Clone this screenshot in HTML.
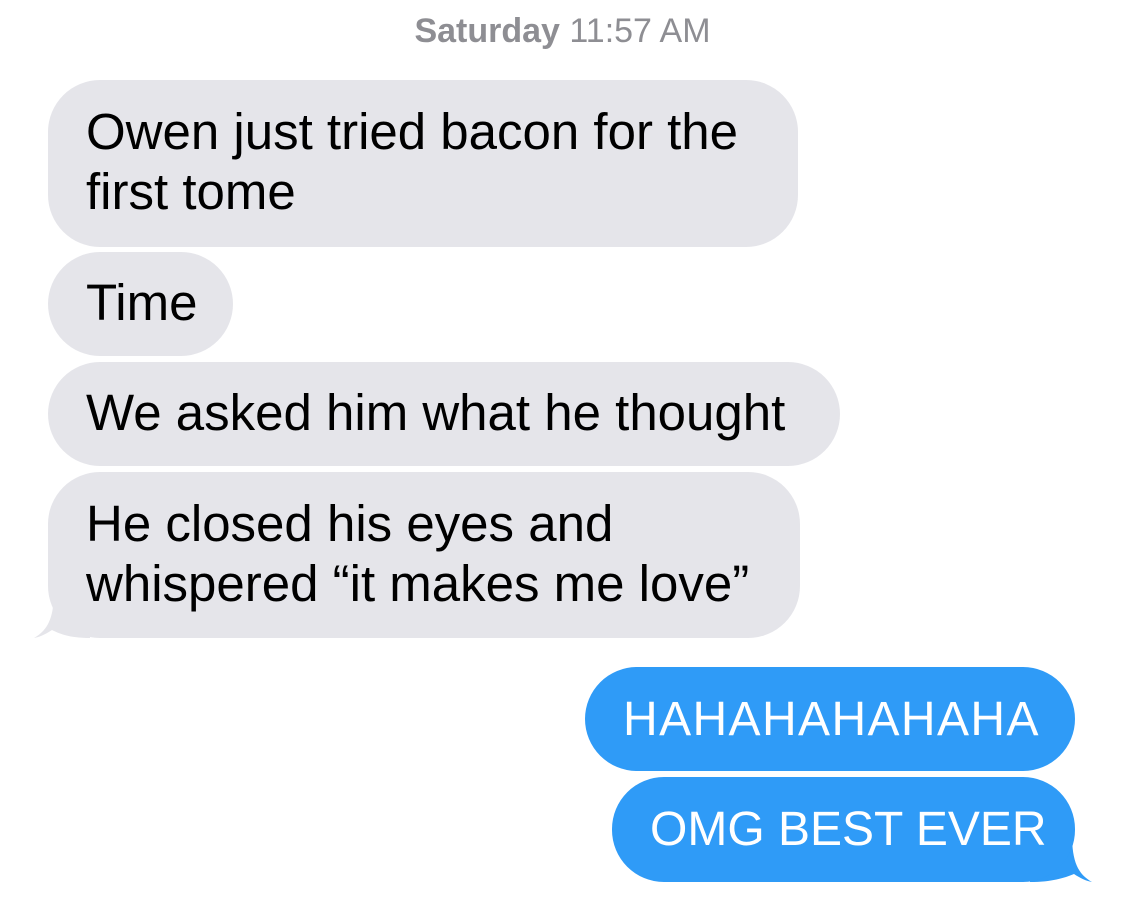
<!DOCTYPE html>
<html><head><meta charset="utf-8"><style>
body{margin:0;width:1125px;height:921px;background:#fff;position:relative;overflow:hidden;font-family:"Liberation Sans",Arial,sans-serif}
.ts{position:absolute;top:12px;left:0;width:1125px;text-align:center;color:#8e8e93;font-size:34px}
.b{position:absolute;border-radius:52px;font-size:51px;line-height:60px;white-space:nowrap;box-sizing:border-box;padding:21px 0 0 38px}
.g{background:#e5e5ea;color:#000}
.bl{background:#2f9bf7;color:#fff;padding-left:38px;font-size:48px;padding-top:23px}
</style></head><body>
<div class="ts"><b>Saturday</b> 11:57 AM</div>
<div class="b g" style="left:48px;top:80px;width:750px;height:167px;padding-top:22px">Owen just tried bacon for the<br>first tome</div>
<div class="b g" style="left:48px;top:252px;width:185px;height:104px">Time</div>
<div class="b g" style="left:48px;top:362px;width:792px;height:104px">We asked him what he thought</div>
<svg style="position:absolute;left:30px;top:590px" width="60" height="50"><path d="M4 48 C18 40 24 28 24 0 L60 0 L60 48 C40 48 30 44 22 40 C16 44 10 47 4 48Z" fill="#e5e5ea"/></svg>
<div class="b g" style="left:48px;top:472px;width:752px;height:166px;padding-top:22px">He closed his eyes and<br>whispered “it makes me love”</div>
<div class="b bl" style="left:585px;top:667px;width:490px;height:104px;letter-spacing:1.4px">HAHAHAHAHAHA</div>
<svg style="position:absolute;left:1030px;top:834px" width="65" height="50"><path d="M62 48 C48 40 42 28 42 0 L0 0 L0 48 C22 48 34 44 44 40 C50 44 56 47 62 48Z" fill="#2f9bf7"/></svg>
<div class="b bl" style="left:612px;top:777px;width:463px;height:105px">OMG BEST EVER</div>
</body></html>
